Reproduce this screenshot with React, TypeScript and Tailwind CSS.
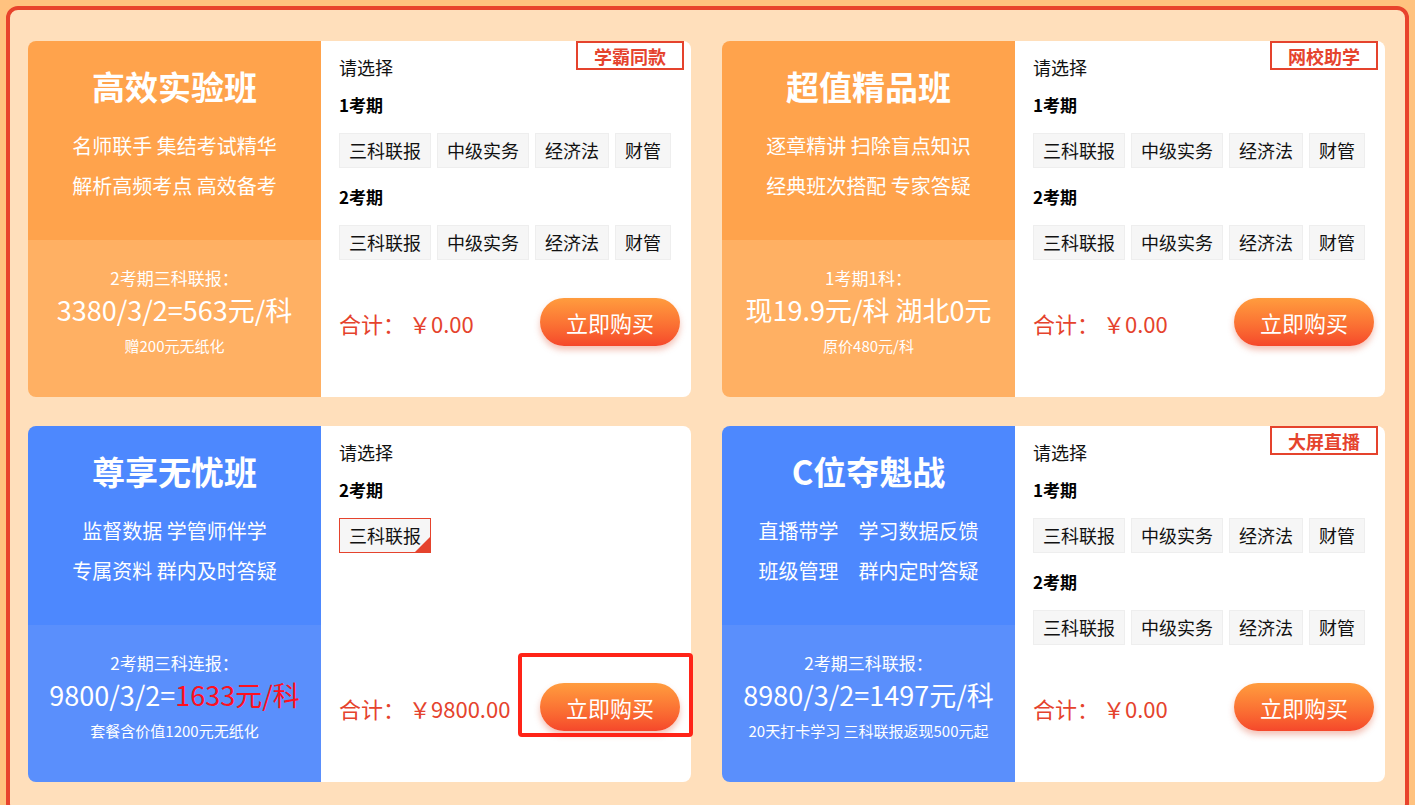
import React from 'react';

type Course = {
  title: string;
  lines: React.ReactNode[];
  theme: 'orange' | 'blue';
  label: string;
  price: React.ReactNode;
  note: string;
  tag?: string;
  terms: { name: string; chips: string[]; selected?: number }[];
  total: string;
  highlight?: boolean;
};

const courses: Course[] = [
  {
    title: '高效实验班',
    lines: ['名师联手 集结考试精华', '解析高频考点 高效备考'],
    theme: 'orange',
    label: '2考期三科联报：',
    price: '3380/3/2=563元/科',
    note: '赠200元无纸化',
    tag: '学霸同款',
    terms: [
      { name: '1考期', chips: ['三科联报', '中级实务', '经济法', '财管'] },
      { name: '2考期', chips: ['三科联报', '中级实务', '经济法', '财管'] },
    ],
    total: '￥0.00',
  },
  {
    title: '超值精品班',
    lines: ['逐章精讲 扫除盲点知识', '经典班次搭配 专家答疑'],
    theme: 'orange',
    label: '1考期1科：',
    price: '现19.9元/科 湖北0元',
    note: '原价480元/科',
    tag: '网校助学',
    terms: [
      { name: '1考期', chips: ['三科联报', '中级实务', '经济法', '财管'] },
      { name: '2考期', chips: ['三科联报', '中级实务', '经济法', '财管'] },
    ],
    total: '￥0.00',
  },
  {
    title: '尊享无忧班',
    lines: ['监督数据 学管师伴学', '专属资料 群内及时答疑'],
    theme: 'blue',
    label: '2考期三科连报：',
    price: (
      <>
        9800/3/2=<span className="text-[#ff1020]">1633元/科</span>
      </>
    ),
    note: '套餐含价值1200元无纸化',
    terms: [{ name: '2考期', chips: ['三科联报'], selected: 0 }],
    total: '￥9800.00',
    highlight: true,
  },
  {
    title: 'C位夺魁战',
    lines: [
      <span className="flex gap-[20px]"><span>直播带学</span><span>学习数据反馈</span></span>,
      <span className="flex gap-[20px]"><span>班级管理</span><span>群内定时答疑</span></span>,
    ],
    theme: 'blue',
    label: '2考期三科联报：',
    price: '8980/3/2=1497元/科',
    note: '20天打卡学习 三科联报返现500元起',
    tag: '大屏直播',
    terms: [
      { name: '1考期', chips: ['三科联报', '中级实务', '经济法', '财管'] },
      { name: '2考期', chips: ['三科联报', '中级实务', '经济法', '财管'] },
    ],
    total: '￥0.00',
  },
];

function CourseCard({ c }: { c: Course }) {
  const orange = c.theme === 'orange';
  return (
    <div className="relative flex h-[356px]">
      <div className="flex w-[293px] shrink-0 flex-col overflow-hidden rounded-l-[8px] text-white">
        <div
          className={`flex h-[199px] flex-col items-center pt-[23px] ${
            orange ? 'bg-[#ffa34c]' : 'bg-[#4d88fe]'
          }`}
        >
          <div className="text-[33px] font-bold leading-[44px]">{c.title}</div>
          <div className="mt-[18px] flex flex-col items-center text-[20px] leading-[40px]">
            {c.lines.map((l, i) => (
              <div key={i}>{l}</div>
            ))}
          </div>
        </div>
        <div
          className={`flex flex-1 flex-col items-center pt-[26px] ${
            orange ? 'bg-[#ffb063]' : 'bg-[#5a8ffc]'
          }`}
        >
          <div className="text-[17px] leading-[24px]">{c.label}</div>
          <div className="mt-[2px] text-[27px] leading-[36px]">{c.price}</div>
          <div className="mt-[8px] text-[15px] leading-[20px]">{c.note}</div>
        </div>
      </div>
      <div className="relative flex flex-1 flex-col rounded-r-[8px] bg-white pl-[18px] pr-[11px] pt-[14px] pb-[51px]">
        {c.tag && (
          <div className="absolute right-[7px] top-0 flex h-[29px] w-[108px] items-center justify-center border-2 border-[#e5432d] text-[18px] font-bold leading-none text-[#e5432d]">
            {c.tag}
          </div>
        )}
        <div className="text-[18px] leading-[24px] text-[#111]">请选择</div>
        {c.terms.map((t, ti) => (
          <div key={t.name}>
            <div
              className={`${ti === 0 ? 'mt-[14px]' : 'mt-[17px]'} text-[17px] font-bold leading-[24px] text-black`}
            >
              {t.name}
            </div>
            <div className="mt-[16px] flex gap-[6px]">
              {t.chips.map((chip, i) => (
                <div
                  key={chip}
                  className={`relative flex h-[35px] items-center border bg-[#f6f6f6] px-[9px] text-[18px] text-[#111] ${
                    t.selected === i ? 'border-[#e5432d]' : 'border-[#eeeeee]'
                  }`}
                >
                  {chip}
                  {t.selected === i && (
                    <span className="absolute bottom-0 right-0 h-0 w-0 border-b-[15px] border-l-[15px] border-b-[#e5432d] border-l-transparent" />
                  )}
                </div>
              ))}
            </div>
          </div>
        ))}
        <div className="mt-auto flex items-center justify-between">
          <div className="pt-[3px] text-[22px] text-[#e5432d]">
            合计：<span className="ml-[4px]">{c.total}</span>
          </div>
          <div className="relative">
            <button className="flex h-[48px] w-[140px] items-center justify-center rounded-full bg-gradient-to-b from-[#ff9c3e] to-[#f5472b] text-[22px] text-white shadow-[0_4px_6px_rgba(220,80,50,0.35)]">
              立即购买
            </button>
            {c.highlight && (
              <div className="pointer-events-none absolute -bottom-[6px] -left-[22px] -right-[13px] -top-[30px] rounded-[4px] border-4 border-[#ff2418]" />
            )}
          </div>
        </div>
      </div>
    </div>
  );
}

export default function App() {
  return (
    <div
      className="min-h-screen bg-[#ffc27f] px-[6px] pt-[6px]"
      style={{ fontFamily: '"Noto Sans CJK SC", "Noto Sans", sans-serif' }}
    >
      <div className="rounded-[12px] border-4 border-[#e8432c] bg-[#ffdfbb] pl-[18px] pr-[20px] pb-[30px] pt-[31px]">
        <div className="grid grid-cols-2 gap-x-[31px] gap-y-[29px]">
          {courses.map((c) => (
            <CourseCard key={c.title} c={c} />
          ))}
        </div>
      </div>
    </div>
  );
}
